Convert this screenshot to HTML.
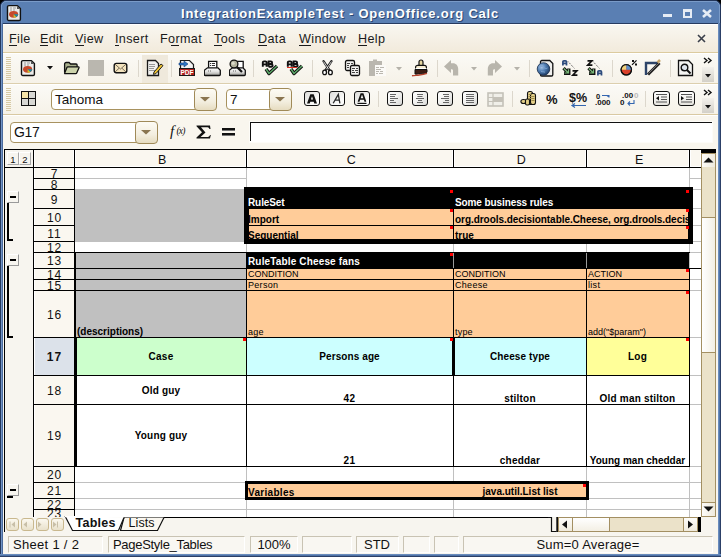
<!DOCTYPE html><html><head><meta charset="utf-8"><style>html,body{margin:0;padding:0;width:721px;height:557px;overflow:hidden;background:#f7f5ef;}body>div,body div{position:absolute;box-sizing:border-box;}svg{position:absolute}</style></head><body>
<div style="left:0px;top:0px;width:721px;height:557px;background:#4d6fa3"></div>
<div style="left:0px;top:0px;width:721px;height:24px;background:#5a7fb3;border-top:1px solid #22355a;border-radius:6px 6px 0 0;border-left:1px solid #22355a;border-right:1px solid #22355a"></div>
<div style="left:4px;top:1px;width:713px;height:1px;background:#7a9bc8"></div>
<svg style="position:absolute;left:0px;top:0px" width="6" height="6" viewBox="0 0 6 6"><path d="M0 0H6V0.5C3 0.5 0.5 3 0.5 6H0z" fill="#000"/><path d="M0.5 6C0.5 3 3 0.5 6 0.5" fill="none" stroke="#22355a" stroke-width="1"/><path d="M1.5 6C1.5 3.5 3.5 1.5 6 1.5" fill="none" stroke="#7a9bc8" stroke-width="1"/></svg>
<svg style="position:absolute;left:715px;top:0px" width="6" height="6" viewBox="0 0 6 6"><g transform="translate(6,0) scale(-1,1)"><path d="M0 0H6V0.5C3 0.5 0.5 3 0.5 6H0z" fill="#000"/><path d="M0.5 6C0.5 3 3 0.5 6 0.5" fill="none" stroke="#22355a" stroke-width="1"/><path d="M1.5 6C1.5 3.5 3.5 1.5 6 1.5" fill="none" stroke="#7a9bc8" stroke-width="1"/></g></svg>
<div style="left:1px;top:5px;width:1px;height:18px;background:#7a9bc8"></div>
<div style="left:719px;top:5px;width:1px;height:18px;background:#7a9bc8"></div>
<div style="left:0px;top:23px;width:721px;height:1px;background:#263b60"></div>
<div style="left:0px;top:23px;width:1px;height:534px;background:#25385c"></div>
<div style="left:1px;top:23px;width:1px;height:534px;background:#7194c6"></div>
<div style="left:2px;top:23px;width:1px;height:534px;background:#4a6a9c"></div>
<div style="left:720px;top:23px;width:1px;height:534px;background:#2c4067"></div>
<div style="left:719px;top:23px;width:1px;height:534px;background:#4e72a6"></div>
<div style="left:718px;top:23px;width:1px;height:534px;background:#6a8cbd"></div>
<div style="left:0px;top:556px;width:721px;height:1px;background:#2c4067"></div>
<div style="left:0px;top:555px;width:721px;height:1px;background:#4e72a6"></div>
<div style="left:0px;top:554px;width:721px;height:1px;background:#6a8cbd"></div>
<div style="left:3px;top:24px;width:715px;height:530px;background:#f7f5ef"></div>
<svg style="position:absolute;left:6px;top:4px" width="16" height="18" viewBox="0 0 16 18"><path d="M2.8 1.6h8.6l3 3v10.6a1.3 1.3 0 0 1-1.3 1.3h-10.3a1.3 1.3 0 0 1-1.3-1.3v-12.3a1.3 1.3 0 0 1 1.3-1.3z" fill="#ececea" stroke="#111" stroke-width="1.4"/><path d="M11 1.6l3.4 3.4h-3.4z" fill="#555"/><g fill="#9a9a9a"><rect x="4" y="3.5" width="2" height="1"/><rect x="7" y="3.5" width="3" height="1"/><rect x="4" y="5.5" width="2" height="1"/><rect x="7" y="5.5" width="2" height="1"/></g><ellipse cx="7.6" cy="10.3" rx="4.6" ry="3.4" fill="#c54a2c"/><path d="M7.6 10.3h4.6a4.6 3.4 0 0 1-2 2.8z" fill="#1b8da6"/><path d="M7.6 10.3l2.6 2.8a4.6 3.4 0 0 1-2.6.6z" fill="#c9c428"/></svg>
<div style="top:8.00px;font-size:13px;line-height:13px;color:#2c4670;white-space:pre;font-family:'Liberation Sans',sans-serif;font-weight:bold;letter-spacing:0.78px;left:182px;">IntegrationExampleTest - OpenOffice.org Calc</div>
<div style="top:7.00px;font-size:13px;line-height:13px;color:#ffffff;white-space:pre;font-family:'Liberation Sans',sans-serif;font-weight:bold;letter-spacing:0.78px;left:181px;">IntegrationExampleTest - OpenOffice.org Calc</div>
<div style="left:663px;top:14px;width:9px;height:3px;background:#e6ecf5"></div>
<div style="left:683px;top:9px;width:9px;height:9px;border:2px solid #e6ecf5;border-top-width:3px"></div>
<svg style="position:absolute;left:702px;top:9px" width="10" height="9" viewBox="0 0 10 9"><path d="M1 1L9 8M9 1L1 8" stroke="#e6ecf5" stroke-width="2.6"/></svg>
<div style="left:3px;top:24px;width:715px;height:29px;background:linear-gradient(#f9f7f1,#f2eadb)"></div>
<div style="left:3px;top:24px;width:715px;height:1px;background:#ffffff"></div>
<div style="left:3px;top:52px;width:715px;height:1px;background:#dccb9f"></div>
<div style="top:33.13px;font-size:12.6px;line-height:12.6px;color:#1a1a1a;white-space:pre;font-family:'Liberation Sans',sans-serif;letter-spacing:0.35px;left:9px;">File</div>
<div style="top:33.13px;font-size:12.6px;line-height:12.6px;color:#1a1a1a;white-space:pre;font-family:'Liberation Sans',sans-serif;letter-spacing:0.35px;left:40px;">Edit</div>
<div style="top:33.13px;font-size:12.6px;line-height:12.6px;color:#1a1a1a;white-space:pre;font-family:'Liberation Sans',sans-serif;letter-spacing:0.35px;left:75px;">View</div>
<div style="top:33.13px;font-size:12.6px;line-height:12.6px;color:#1a1a1a;white-space:pre;font-family:'Liberation Sans',sans-serif;letter-spacing:0.35px;left:115px;">Insert</div>
<div style="top:33.13px;font-size:12.6px;line-height:12.6px;color:#1a1a1a;white-space:pre;font-family:'Liberation Sans',sans-serif;letter-spacing:0.35px;left:160px;">Format</div>
<div style="top:33.13px;font-size:12.6px;line-height:12.6px;color:#1a1a1a;white-space:pre;font-family:'Liberation Sans',sans-serif;letter-spacing:0.35px;left:214px;">Tools</div>
<div style="top:33.13px;font-size:12.6px;line-height:12.6px;color:#1a1a1a;white-space:pre;font-family:'Liberation Sans',sans-serif;letter-spacing:0.35px;left:258px;">Data</div>
<div style="top:33.13px;font-size:12.6px;line-height:12.6px;color:#1a1a1a;white-space:pre;font-family:'Liberation Sans',sans-serif;letter-spacing:0.35px;left:299px;">Window</div>
<div style="top:33.13px;font-size:12.6px;line-height:12.6px;color:#1a1a1a;white-space:pre;font-family:'Liberation Sans',sans-serif;letter-spacing:0.35px;left:358px;">Help</div>
<div style="left:9px;top:45px;width:8px;height:1px;background:#1a1a1a"></div>
<div style="left:40px;top:45px;width:8px;height:1px;background:#1a1a1a"></div>
<div style="left:75px;top:45px;width:9px;height:1px;background:#1a1a1a"></div>
<div style="left:115px;top:45px;width:4px;height:1px;background:#1a1a1a"></div>
<div style="left:171px;top:45px;width:8px;height:1px;background:#1a1a1a"></div>
<div style="left:214px;top:45px;width:8px;height:1px;background:#1a1a1a"></div>
<div style="left:258px;top:45px;width:9px;height:1px;background:#1a1a1a"></div>
<div style="left:299px;top:45px;width:12px;height:1px;background:#1a1a1a"></div>
<div style="left:358px;top:45px;width:9px;height:1px;background:#1a1a1a"></div>
<svg style="position:absolute;left:697px;top:34px" width="9" height="9" viewBox="0 0 9 9"><path d="M1 1L8 8M8 1L1 8" stroke="#3a3f4a" stroke-width="1.6"/></svg>
<div style="left:3px;top:53px;width:715px;height:30px;background:linear-gradient(#fbfaf6,#f6f2e8)"></div>
<div style="left:3px;top:85px;width:715px;height:29px;background:linear-gradient(#fbfaf6,#f6f2e8)"></div>
<div style="left:3px;top:53px;width:715px;height:1px;background:#ffffff"></div>
<div style="left:3px;top:83px;width:715px;height:1px;background:#dccfae"></div>
<div style="left:3px;top:84px;width:715px;height:1px;background:#ffffff"></div>
<div style="left:3px;top:114px;width:715px;height:1px;background:#d9c9a2"></div>
<div style="left:3px;top:115px;width:715px;height:1px;background:#ffffff"></div>
<div style="left:6px;top:57px;width:5px;height:1px;background:#d6c9a4"></div>
<div style="left:6px;top:59px;width:5px;height:1px;background:#d6c9a4"></div>
<div style="left:6px;top:61px;width:5px;height:1px;background:#d6c9a4"></div>
<div style="left:6px;top:63px;width:5px;height:1px;background:#d6c9a4"></div>
<div style="left:6px;top:65px;width:5px;height:1px;background:#d6c9a4"></div>
<div style="left:6px;top:67px;width:5px;height:1px;background:#d6c9a4"></div>
<div style="left:6px;top:69px;width:5px;height:1px;background:#d6c9a4"></div>
<div style="left:6px;top:71px;width:5px;height:1px;background:#d6c9a4"></div>
<div style="left:6px;top:73px;width:5px;height:1px;background:#d6c9a4"></div>
<div style="left:6px;top:75px;width:5px;height:1px;background:#d6c9a4"></div>
<div style="left:6px;top:77px;width:5px;height:1px;background:#d6c9a4"></div>
<div style="left:6px;top:79px;width:5px;height:1px;background:#d6c9a4"></div>
<div style="left:6px;top:88px;width:5px;height:1px;background:#d6c9a4"></div>
<div style="left:6px;top:90px;width:5px;height:1px;background:#d6c9a4"></div>
<div style="left:6px;top:92px;width:5px;height:1px;background:#d6c9a4"></div>
<div style="left:6px;top:94px;width:5px;height:1px;background:#d6c9a4"></div>
<div style="left:6px;top:96px;width:5px;height:1px;background:#d6c9a4"></div>
<div style="left:6px;top:98px;width:5px;height:1px;background:#d6c9a4"></div>
<div style="left:6px;top:100px;width:5px;height:1px;background:#d6c9a4"></div>
<div style="left:6px;top:102px;width:5px;height:1px;background:#d6c9a4"></div>
<div style="left:6px;top:104px;width:5px;height:1px;background:#d6c9a4"></div>
<div style="left:6px;top:106px;width:5px;height:1px;background:#d6c9a4"></div>
<div style="left:6px;top:108px;width:5px;height:1px;background:#d6c9a4"></div>
<div style="left:6px;top:110px;width:5px;height:1px;background:#d6c9a4"></div>
<svg style="position:absolute;left:20px;top:59px" width="16" height="18" viewBox="0 0 16 18"><path d="M2.8 1.6h8.6l3 3v10.6a1.3 1.3 0 0 1-1.3 1.3h-10.3a1.3 1.3 0 0 1-1.3-1.3v-12.3a1.3 1.3 0 0 1 1.3-1.3z" fill="#ececea" stroke="#111" stroke-width="1.4"/><path d="M11 1.6l3.4 3.4h-3.4z" fill="#555"/><g fill="#9a9a9a"><rect x="4" y="3.5" width="2" height="1"/><rect x="7" y="3.5" width="3" height="1"/><rect x="4" y="5.5" width="2" height="1"/><rect x="7" y="5.5" width="2" height="1"/></g><ellipse cx="7.6" cy="10.3" rx="4.6" ry="3.4" fill="#c54a2c"/><path d="M7.6 10.3h4.6a4.6 3.4 0 0 1-2 2.8z" fill="#1b8da6"/><path d="M7.6 10.3l2.6 2.8a4.6 3.4 0 0 1-2.6.6z" fill="#c9c428"/></svg>
<svg style="position:absolute;left:47px;top:66px" width="6" height="4" viewBox="0 0 6 4"><path d="M0 0h6L3 3.5z" fill="#111"/></svg>
<svg style="position:absolute;left:63px;top:61px" width="17" height="14" viewBox="0 0 17 14"><path d="M1.6 11.5V3a1.5 1.5 0 0 1 1.5-1.5h3l1.5 1.5h5.5a1 1 0 0 1 1 1v2" fill="#a9b08c" stroke="#111" stroke-width="1.3"/><path d="M1.6 12.3l2.3-5.8a1 1 0 0 1 .9-.6h10.7a.6.6 0 0 1 .5.8l-2.3 5.4a1 1 0 0 1-.9.6h-10.6a.6.6 0 0 1-.6-.4z" fill="#ccd3ab" stroke="#111" stroke-width="1.3"/></svg>
<div style="left:88px;top:60px;width:16px;height:16px;background:#bab7af"></div>
<svg style="position:absolute;left:113px;top:62px" width="15" height="12" viewBox="0 0 15 12"><rect x="1.2" y="1.4" width="12.6" height="9.4" rx="2" fill="#f3e3bd" stroke="#111" stroke-width="1.4"/><path d="M2 2.2L7.5 7l5.5-4.8M2 10L6 6.3M13 10L9 6.3" fill="none" stroke="#6b6150" stroke-width="0.9"/></svg>
<div style="left:138px;top:60px;width:1px;height:17px;background:#dcd7cc"></div>
<div style="left:142px;top:55px;width:26px;height:28px;background:#efe9dc"></div>
<svg style="position:absolute;left:146px;top:59px" width="18" height="18" viewBox="0 0 18 18"><path d="M1.5 1.5h8l3 3v12h-11z" fill="#f2f2f0" stroke="#1a1a1a" stroke-width="1.3"/><g fill="#999"><rect x="3" y="5" width="6" height="1"/><rect x="3" y="7" width="6" height="1"/><rect x="3" y="9" width="5" height="1"/><rect x="3" y="11" width="6" height="1"/></g><path d="M8 13l7-8 2 1.6-7 8-2.6.8z" fill="#f2c530" stroke="#222" stroke-width="1"/></svg>
<div style="left:171px;top:60px;width:1px;height:17px;background:#dcd7cc"></div>
<svg style="position:absolute;left:178px;top:59px" width="18" height="18" viewBox="0 0 18 18"><path d="M2.5 1.5h9l4 4v11h-13z" fill="#f2f2f2" stroke="#1a1a1a" stroke-width="1.2"/><rect x="1.5" y="9.5" width="15" height="7" fill="#b3201e" stroke="#1a1a1a" stroke-width="1"/><text x="9" y="16" font-family="Liberation Sans" font-weight="bold" font-size="6.5" fill="#fff" text-anchor="middle">PDF</text><path d="M1 4h5V2l4 3-4 3V6H1z" fill="#2d74c4" stroke="#153e78" stroke-width=".6"/></svg>
<svg style="position:absolute;left:204px;top:60px" width="17" height="17" viewBox="0 0 17 17"><defs><linearGradient id="pg" x1="0" y1="0" x2="0" y2="1"><stop offset="0" stop-color="#fff"/><stop offset=".5" stop-color="#e2e2e0"/><stop offset="1" stop-color="#9c9c98"/></linearGradient></defs><path d="M4.6 8V1.4h8.2V8" fill="#fff" stroke="#111" stroke-width="1.3"/><g fill="#333"><rect x="6" y="3" width="1.2" height="1"/><rect x="8" y="3" width="3" height="1"/><rect x="6" y="5" width="1.2" height="1"/><rect x="8" y="5" width="3" height="1"/></g><path d="M3.5 7.8h10.5l2.3 2.5v4.2a1 1 0 0 1-1 1h-14a1 1 0 0 1-1-1v-4.2z" fill="url(#pg)" stroke="#111" stroke-width="1.3"/><rect x="4" y="10.5" width="1" height="1" fill="#666"/><rect x="6" y="10.5" width="1" height="1" fill="#666"/></svg>
<svg style="position:absolute;left:229px;top:59px" width="17" height="18" viewBox="0 0 17 18"><path d="M6 9V2.4h8.2V9" fill="#fff" stroke="#111" stroke-width="1.3"/><path d="M3.5 8.8h10.5l2.3 2.5v4.2a1 1 0 0 1-1 1h-14a1 1 0 0 1-1-1v-4.2z" fill="url(#pg)" stroke="#111" stroke-width="1.3"/><rect x="4" y="11.5" width="1" height="1" fill="#666"/><rect x="6" y="11.5" width="1" height="1" fill="#666"/><path d="M6.5 6.5l6.5 6.5" stroke="#111" stroke-width="2.2"/><circle cx="5" cy="5" r="3.9" fill="#b4b49e" stroke="#111" stroke-width="1.3"/><circle cx="4.2" cy="4.2" r="1.5" fill="#dcdccc"/></svg>
<div style="left:253px;top:60px;width:1px;height:17px;background:#dcd7cc"></div>
<svg style="position:absolute;left:261px;top:60px" width="18" height="16" viewBox="0 0 18 16"><path d="M1.8 6.8V2.6a1.2 1.2 0 0 1 1.2-1.2h1.4a1.2 1.2 0 0 1 1.2 1.2v4.2M1.8 4.4h3.8M7.6 6.8V1.4h2.2a1.3 1.3 0 0 1 0 2.6H7.6M7.6 4h2.6a1.4 1.4 0 0 1 0 2.8H7.6" fill="none" stroke="#111" stroke-width="1.9"/><path d="M5 9l3 4.5 8-7.5" fill="none" stroke="#111" stroke-width="3.4" stroke-linejoin="round"/><path d="M5 9l3 4.5 8-7.5" fill="none" stroke="#5fae6c" stroke-width="1.4"/></svg>
<svg style="position:absolute;left:286px;top:60px" width="18" height="16" viewBox="0 0 18 16"><path d="M1.8 6.8V2.6a1.2 1.2 0 0 1 1.2-1.2h1.4a1.2 1.2 0 0 1 1.2 1.2v4.2M1.8 4.4h3.8M7.6 6.8V1.4h2.2a1.3 1.3 0 0 1 0 2.6H7.6M7.6 4h2.6a1.4 1.4 0 0 1 0 2.8H7.6" fill="none" stroke="#111" stroke-width="1.9"/><path d="M1 8l1-1 1 1 1-1 1 1 1-1 1 1 1-1 1 1 1-1 1 1" stroke="#e03020" stroke-width="1" fill="none"/><path d="M5 9l3 4.5 8-7.5" fill="none" stroke="#111" stroke-width="3.4" stroke-linejoin="round"/><path d="M5 9l3 4.5 8-7.5" fill="none" stroke="#5fae6c" stroke-width="1.4"/></svg>
<div style="left:312px;top:60px;width:1px;height:17px;background:#dcd7cc"></div>
<svg style="position:absolute;left:321px;top:60px" width="13" height="16" viewBox="0 0 13 16"><path d="M2.5 1.2L8.3 10M10.5 1.2L4.7 10" fill="none" stroke="#222" stroke-width="2.3" stroke-linecap="round"/><path d="M2.6 1.6L7.6 9.2M10.4 1.6L5.4 9.2" fill="none" stroke="#f0f0f0" stroke-width="0.8"/><ellipse cx="3.6" cy="12.4" rx="1.9" ry="2.3" fill="#fff" stroke="#111" stroke-width="1.3"/><ellipse cx="9.4" cy="12.4" rx="1.9" ry="2.3" fill="#fff" stroke="#111" stroke-width="1.3"/></svg>
<svg style="position:absolute;left:344px;top:59px" width="17" height="18" viewBox="0 0 17 18"><rect x="1.5" y="1.5" width="9" height="10" rx="1.5" fill="#f2f2f0" stroke="#111" stroke-width="1.3"/><rect x="6.5" y="6.5" width="9" height="10" rx="1.5" fill="#f2f2f0" stroke="#111" stroke-width="1.3"/><g fill="#444"><rect x="3" y="4" width="3" height="1"/><rect x="7" y="4" width="2" height="1"/><rect x="3" y="6" width="2" height="1"/><rect x="3" y="8" width="2" height="1"/><rect x="8" y="9" width="3" height="1"/><rect x="12" y="9" width="2" height="1"/><rect x="8" y="11" width="2" height="1"/><rect x="11" y="11" width="3" height="1"/><rect x="8" y="13" width="3" height="1"/><rect x="12" y="13" width="2" height="1"/></g></svg>
<svg style="position:absolute;left:368px;top:59px" width="19" height="18" viewBox="0 0 19 18"><rect x="1" y="2" width="13" height="15" fill="#bab7af"/><rect x="5" y="0.5" width="4" height="3" fill="#bab7af"/><rect x="7" y="6" width="11" height="11" fill="#fbfaf7"/><g fill="#bab7af"><rect x="8" y="8" width="3" height="1"/><rect x="12" y="8" width="4" height="1"/><rect x="8" y="10" width="5" height="1"/><rect x="8" y="12" width="3" height="1"/><rect x="12" y="12" width="3" height="1"/><rect x="8" y="14" width="2" height="1"/><rect x="11" y="14" width="4" height="1"/></g></svg>
<svg style="position:absolute;left:396px;top:67px" width="6" height="4" viewBox="0 0 6 4"><path d="M0 0h6L3 3.5z" fill="#b5b2aa"/></svg>
<svg style="position:absolute;left:411px;top:59px" width="18" height="18" viewBox="0 0 18 18"><path d="M8 6.5V3a2 2 0 0 1 4 0v3.5" fill="#e6d7a0" stroke="#111" stroke-width="1.2"/><path d="M4.6 11V8.3a2 2 0 0 1 2-2h6.8a2 2 0 0 1 2 2V11" fill="#f5ecd0" stroke="#111" stroke-width="1.2"/><rect x="4.5" y="9" width="11" height="1.3" fill="#fff"/><path d="M4 10.5h12v2.5c-1 1.5-2 2-3 1.2-1 1-2 .5-3 .3-1 .8-2 .5-3 .2-1 .8-2 .5-3 .3z" fill="#3b1d14" stroke="#111" stroke-width="1"/><path d="M1 16.8c2-.5 4-.4 6-.6 3-.3 6-.6 9-1.8" stroke="#b5422c" stroke-width="1.4" fill="none"/></svg>
<div style="left:437px;top:60px;width:1px;height:17px;background:#dcd7cc"></div>
<svg style="position:absolute;left:443px;top:60px" width="16" height="16" viewBox="0 0 16 16"><path d="M1 6.5L8 0V13Z M7.5 3.2H10C13 3.2 15.2 5.6 15.2 9V15.6H10V10.8C10 9.8 9.5 9.3 8.5 9.3H7.5Z" fill="#b8b5ac"/></svg>
<svg style="position:absolute;left:471px;top:67px" width="6" height="4" viewBox="0 0 6 4"><path d="M0 0h6L3 3.5z" fill="#b5b2aa"/></svg>
<svg style="position:absolute;left:487px;top:60px" width="16" height="16" viewBox="0 0 16 16"><g transform="translate(16,0) scale(-1,1)"><path d="M1 6.5L8 0V13Z M7.5 3.2H10C13 3.2 15.2 5.6 15.2 9V15.6H10V10.8C10 9.8 9.5 9.3 8.5 9.3H7.5Z" fill="#b8b5ac"/></g></svg>
<svg style="position:absolute;left:514px;top:67px" width="6" height="4" viewBox="0 0 6 4"><path d="M0 0h6L3 3.5z" fill="#b5b2aa"/></svg>
<div style="left:529px;top:60px;width:1px;height:17px;background:#dcd7cc"></div>
<svg style="position:absolute;left:536px;top:59px" width="18" height="18" viewBox="0 0 18 18"><defs><radialGradient id="gl" cx=".35" cy=".35" r=".7"><stop offset="0" stop-color="#a9c6e8"/><stop offset=".5" stop-color="#4d7bb0"/><stop offset="1" stop-color="#1f3d66"/></radialGradient></defs><path d="M5.8 1.5h8l3 3v11.2a1.3 1.3 0 0 1-1.3 1.3h-9.7a1.3 1.3 0 0 1-1.3-1.3v-12.9a1.3 1.3 0 0 1 1.3-1.3z" fill="#f0f0ee" stroke="#111" stroke-width="1.3"/><circle cx="7.5" cy="10" r="6.3" fill="url(#gl)" stroke="#1c2f4c" stroke-width=".8"/><path d="M4 8c1.5-1 3-.5 4 .5s2.5 1.5 3.5.5M5 12.5c1.5.5 3 0 4 .8" stroke="#7fa3cf" stroke-width="1" fill="none"/></svg>
<svg style="position:absolute;left:561px;top:59px" width="18" height="18" viewBox="0 0 18 18"><path transform="translate(1,1)" d="M0.9 5.6V1.9a1 1 0 0 1 1-1h1.6a1 1 0 0 1 1 1v3.7M0.9 3.4h3.6" fill="none" stroke="#2c4b7c" stroke-width="1.7"/><path d="M7 2.5l6.5 7" stroke="#333" stroke-width="1" stroke-dasharray="1 1.3"/><path d="M2.5 9.2l4.8 4.8M7.8 9.6v4.8H3" fill="none" stroke="#111" stroke-width="3.3"/><path d="M2.8 9.5l4.5 4.5M7.5 10.2v3.8H3.5" fill="none" stroke="#79b777" stroke-width="1.2"/><path transform="translate(11,11)" d="M0.5 0.9h4.4L0.8 5.1h4.6" fill="none" stroke="#111" stroke-width="1.6"/></svg>
<svg style="position:absolute;left:586px;top:59px" width="18" height="18" viewBox="0 0 18 18"><path transform="translate(1,1)" d="M0.5 0.9h4.4L0.8 5.1h4.6" fill="none" stroke="#111" stroke-width="1.6"/><path d="M7 2.5l6.5 7" stroke="#333" stroke-width="1" stroke-dasharray="1 1.3"/><path d="M2.5 9.2l4.8 4.8M7.8 9.6v4.8H3" fill="none" stroke="#111" stroke-width="3.3"/><path d="M2.8 9.5l4.5 4.5M7.5 10.2v3.8H3.5" fill="none" stroke="#79b777" stroke-width="1.2"/><path transform="translate(11,11)" d="M0.9 5.6V1.9a1 1 0 0 1 1-1h1.6a1 1 0 0 1 1 1v3.7M0.9 3.4h3.6" fill="none" stroke="#2c4b7c" stroke-width="1.7"/></svg>
<div style="left:612px;top:60px;width:1px;height:17px;background:#dcd7cc"></div>
<svg style="position:absolute;left:619px;top:59px" width="20" height="18" viewBox="0 0 20 18"><circle cx="7.3" cy="10.8" r="5.2" fill="#d8402a" stroke="#111" stroke-width="1.2"/><path d="M7.3 10.8V5.6a5.2 5.2 0 0 0-5.2 5.2z" fill="#f1d27a"/><path d="M7.3 10.8V5.6a5.2 5.2 0 0 1 5.2 5.2z" fill="#5d8fc8"/><circle cx="7.3" cy="10.8" r="5.2" fill="none" stroke="#111" stroke-width="1.2"/><path d="M13 5.8l4.5-4.5" stroke="#111" stroke-width="1.2"/><rect x="13" y="1" width="2" height="2" fill="#111"/><rect x="16" y="4.5" width="2" height="2" fill="#111"/></svg>
<svg style="position:absolute;left:644px;top:59px" width="18" height="18" viewBox="0 0 18 18"><path d="M2 16V4h12" fill="none" stroke="#2d4468" stroke-width="2.4"/><path d="M4 15.5L15.5 4" stroke="#222" stroke-width="3"/><path d="M4.5 14.5L15 4" stroke="#888" stroke-width="0.8"/><path d="M13.5 3.5l2.5-2.5" stroke="#c7a56a" stroke-width="2.5"/></svg>
<div style="left:670px;top:60px;width:1px;height:17px;background:#dcd7cc"></div>
<svg style="position:absolute;left:677px;top:59px" width="17" height="18" viewBox="0 0 17 18"><path d="M1.5 1.5h10l4 4v11h-14z" fill="#f4f4f2" stroke="#111" stroke-width="1.3"/><circle cx="7.5" cy="8.5" r="3.3" fill="#dfe6ee" stroke="#111" stroke-width="1.4"/><path d="M10 11l3.5 3.5" stroke="#111" stroke-width="2"/></svg>
<div style="left:702px;top:67px;width:12px;height:15px;background:linear-gradient(#f3f1ec,#d3d0c8)"></div>
<svg style="position:absolute;left:703px;top:57px" width="10" height="7" viewBox="0 0 10 7"><path d="M1 1l3 2.5-3 2.5M5 1l3 2.5-3 2.5" fill="none" stroke="#111" stroke-width="1.4"/></svg>
<svg style="position:absolute;left:705px;top:74px" width="6" height="4" viewBox="0 0 6 4"><path d="M0 0h6L3 3.5z" fill="#111"/></svg>
<div style="left:702px;top:98px;width:12px;height:15px;background:linear-gradient(#f3f1ec,#d3d0c8)"></div>
<svg style="position:absolute;left:703px;top:89px" width="10" height="7" viewBox="0 0 10 7"><path d="M1 1l3 2.5-3 2.5M5 1l3 2.5-3 2.5" fill="none" stroke="#111" stroke-width="1.4"/></svg>
<svg style="position:absolute;left:705px;top:105px" width="6" height="4" viewBox="0 0 6 4"><path d="M0 0h6L3 3.5z" fill="#111"/></svg>
<svg style="position:absolute;left:20px;top:90px" width="17" height="17" viewBox="0 0 17 17"><rect x="1" y="1" width="15" height="15" fill="#111"/><rect x="2" y="2" width="6" height="6" fill="#f6e4a8"/><rect x="9" y="2" width="6" height="6" fill="#d8d8d4"/><rect x="2" y="9" width="6" height="6" fill="#d8d8d4"/><rect x="9" y="9" width="6" height="6" fill="#d8d8d4"/></svg>
<div style="left:51px;top:89px;width:147px;height:21px;background:#fff;border:1px solid #a8925f;border-radius:4px 0 0 4px"></div>
<div style="left:194px;top:88px;width:23px;height:23px;background:linear-gradient(#fdfbf4,#f3eedf 60%,#e6dcc0);border:1px solid #a08a58;border-radius:4px"></div>
<svg style="position:absolute;left:200px;top:97px" width="10" height="5" viewBox="0 0 10 5"><path d="M0 0h10L5 4.5z" fill="#8a7550"/></svg>
<div style="top:93.07px;font-size:13.5px;line-height:13.5px;color:#111;white-space:pre;font-family:'Liberation Sans',sans-serif;left:55px;">Tahoma</div>
<div style="left:226px;top:89px;width:47px;height:21px;background:#fff;border:1px solid #a8925f;border-radius:4px 0 0 4px"></div>
<div style="left:269px;top:88px;width:23px;height:23px;background:linear-gradient(#fdfbf4,#f3eedf 60%,#e6dcc0);border:1px solid #a08a58;border-radius:4px"></div>
<svg style="position:absolute;left:275px;top:97px" width="10" height="5" viewBox="0 0 10 5"><path d="M0 0h10L5 4.5z" fill="#8a7550"/></svg>
<div style="top:93.07px;font-size:13.5px;line-height:13.5px;color:#111;white-space:pre;font-family:'Liberation Sans',sans-serif;left:230px;">7</div>
<div style="left:304px;top:91px;width:16px;height:15px;background:linear-gradient(135deg,#dcdcda,#fafaf8 70%,#fff);border:1.4px solid #111;border-radius:3px"></div>
<svg style="position:absolute;left:304px;top:91px" width="16" height="15" viewBox="0 0 16 15"><path fill-rule="evenodd" d="M3 12.5L6.3 3.2h3.4L13 12.5h-2.7l-.6-1.8H6.3l-.6 1.8zM6.9 8.6h2.2L8 5.3z" fill="#111"/></svg>
<div style="left:329px;top:91px;width:16px;height:15px;background:linear-gradient(135deg,#dcdcda,#fafaf8 70%,#fff);border:1.4px solid #111;border-radius:3px"></div>
<svg style="position:absolute;left:329px;top:91px" width="16" height="15" viewBox="0 0 16 15"><path d="M4.2 12.3L9.3 3.4l1.6 8.9M6.2 9.2h4.4" fill="none" stroke="#2a2a2a" stroke-width="1.3"/></svg>
<div style="left:354px;top:91px;width:16px;height:15px;background:linear-gradient(135deg,#dcdcda,#fafaf8 70%,#fff);border:1.4px solid #111;border-radius:3px"></div>
<svg style="position:absolute;left:354px;top:91px" width="16" height="15" viewBox="0 0 16 15"><path d="M4.5 10.8L7.2 3.2h1.6l2.7 7.6M5.8 8h4.4" fill="none" stroke="#111" stroke-width="1.7"/><rect x="3.5" y="11.8" width="9" height="1.2" fill="#111"/></svg>
<div style="left:378px;top:91px;width:1px;height:16px;background:#dcd7cc"></div>
<div style="left:387px;top:91px;width:16px;height:15px;background:linear-gradient(135deg,#fff,#f4f4f2 40%,#dadad8);border:1.4px solid #111;border-radius:3px"></div>
<svg style="position:absolute;left:387px;top:91px" width="16" height="15" viewBox="0 0 16 15"><rect x="3" y="3" width="6" height="1" fill="#666"/><rect x="3" y="5" width="5" height="1" fill="#666"/><rect x="3" y="7" width="8" height="1" fill="#666"/><rect x="3" y="9" width="4" height="1" fill="#666"/><rect x="3" y="11" width="6" height="1" fill="#666"/></svg>
<div style="left:412px;top:91px;width:16px;height:15px;background:linear-gradient(135deg,#fff,#f4f4f2 40%,#dadad8);border:1.4px solid #111;border-radius:3px"></div>
<svg style="position:absolute;left:412px;top:91px" width="16" height="15" viewBox="0 0 16 15"><rect x="5.0" y="3" width="6" height="1" fill="#666"/><rect x="5.5" y="5" width="5" height="1" fill="#666"/><rect x="4.0" y="7" width="8" height="1" fill="#666"/><rect x="6.0" y="9" width="4" height="1" fill="#666"/><rect x="5.0" y="11" width="6" height="1" fill="#666"/></svg>
<div style="left:437px;top:91px;width:16px;height:15px;background:linear-gradient(135deg,#fff,#f4f4f2 40%,#dadad8);border:1.4px solid #111;border-radius:3px"></div>
<svg style="position:absolute;left:437px;top:91px" width="16" height="15" viewBox="0 0 16 15"><rect x="6" y="3" width="6" height="1" fill="#666"/><rect x="7" y="5" width="5" height="1" fill="#666"/><rect x="4" y="7" width="8" height="1" fill="#666"/><rect x="8" y="9" width="4" height="1" fill="#666"/><rect x="6" y="11" width="6" height="1" fill="#666"/></svg>
<div style="left:462px;top:91px;width:16px;height:15px;background:linear-gradient(135deg,#fff,#f4f4f2 40%,#dadad8);border:1.4px solid #111;border-radius:3px"></div>
<svg style="position:absolute;left:462px;top:91px" width="16" height="15" viewBox="0 0 16 15"><rect x="4" y="3" width="8" height="1" fill="#666"/><rect x="4" y="5" width="8" height="1" fill="#666"/><rect x="4" y="7" width="8" height="1" fill="#666"/><rect x="4" y="9" width="8" height="1" fill="#666"/><rect x="4" y="11" width="8" height="1" fill="#666"/></svg>
<svg style="position:absolute;left:487px;top:92px" width="17" height="15" viewBox="0 0 17 15"><rect x="1" y="1" width="15" height="13" fill="#f0efe9" stroke="#c4c1b8" stroke-width="1.6"/><rect x="6" y="5.5" width="10" height="4" fill="#c4c1b8"/><path d="M1 5.5h15M1 9.5h15M6 1v13" stroke="#c4c1b8" stroke-width="1.2"/></svg>
<div style="left:512px;top:91px;width:1px;height:16px;background:#dcd7cc"></div>
<svg style="position:absolute;left:520px;top:90px" width="17" height="16" viewBox="0 0 17 16"><g stroke="#111" stroke-width="1.1" fill="#e4d08a"><rect x="7.5" y="1.5" width="5" height="13" rx="2"/><rect x="10.5" y="3.5" width="5" height="11" rx="2"/><ellipse cx="3.5" cy="11.5" rx="2.6" ry="2"/><rect x="5.5" y="9" width="4" height="6" rx="1.5"/></g><g fill="#9c8a4a"><rect x="8.5" y="4" width="3" height="1"/><rect x="8.5" y="6" width="3" height="1"/><rect x="8.5" y="8" width="3" height="1"/><rect x="11.5" y="6" width="3" height="1"/><rect x="11.5" y="8" width="3" height="1"/><rect x="11.5" y="10" width="3" height="1"/></g></svg>
<div style="top:92.50px;font-size:13px;line-height:13px;color:#111;white-space:pre;font-family:'Liberation Sans',sans-serif;font-weight:bold;left:546px;">%</div>
<div style="top:92.42px;font-size:12.5px;line-height:12.5px;color:#111;white-space:pre;font-family:'Liberation Sans',sans-serif;font-weight:bold;left:569px;">$%</div>
<svg style="position:absolute;left:570px;top:103px" width="17" height="5" viewBox="0 0 17 5"><path d="M16 2.5H3M5 0.5L2 2.5 5 4.5" fill="none" stroke="#3466b0" stroke-width="1.2"/></svg>
<div style="top:92.65px;font-size:7.5px;line-height:7.5px;color:#111;white-space:pre;font-family:'Liberation Sans',sans-serif;font-weight:bold;left:596px;">0</div>
<svg style="position:absolute;left:602px;top:94px" width="9" height="5" viewBox="0 0 9 5"><path d="M0 1.5h7v2M5 1.5l2 1.5" fill="none" stroke="#3466b0" stroke-width="1.1"/></svg>
<div style="top:98.73px;font-size:8px;line-height:8px;color:#111;white-space:pre;font-family:'Liberation Sans',sans-serif;font-weight:bold;left:595px;">.000</div>
<div style="top:92.23px;font-size:8px;line-height:8px;color:#111;white-space:pre;font-family:'Liberation Sans',sans-serif;font-weight:bold;left:622px;">.00</div>
<div style="top:92.23px;font-size:8px;line-height:8px;color:#bbb;white-space:pre;font-family:'Liberation Sans',sans-serif;font-weight:bold;left:634px;">0</div>
<div style="top:98.73px;font-size:8px;line-height:8px;color:#111;white-space:pre;font-family:'Liberation Sans',sans-serif;font-weight:bold;left:620px;">0</div>
<svg style="position:absolute;left:626px;top:100px" width="10" height="6" viewBox="0 0 10 6"><path d="M8 0v3.5H2M4 1.5L2 3.5 4 5.5" fill="none" stroke="#3466b0" stroke-width="1.1"/></svg>
<div style="left:645px;top:91px;width:1px;height:16px;background:#dcd7cc"></div>
<div style="left:653px;top:91px;width:17px;height:15px;background:linear-gradient(#fff,#e6e4de);border:1.4px solid #111;border-radius:3px"></div>
<svg style="position:absolute;left:653px;top:91px" width="17" height="15" viewBox="0 0 17 15"><g fill="#555"><rect x="3" y="3" width="11" height="1"/><rect x="8" y="5.5" width="6" height="1"/><rect x="8" y="8" width="6" height="1"/><rect x="3" y="10.5" width="11" height="1"/></g><path d="M6 5L3 7.2 6 9.5z" fill="#111"/></svg>
<div style="left:678px;top:91px;width:17px;height:15px;background:linear-gradient(#fff,#e6e4de);border:1.4px solid #111;border-radius:3px"></div>
<svg style="position:absolute;left:678px;top:91px" width="17" height="15" viewBox="0 0 17 15"><g fill="#555"><rect x="3" y="3" width="11" height="1"/><rect x="8" y="5.5" width="6" height="1"/><rect x="8" y="8" width="6" height="1"/><rect x="3" y="10.5" width="11" height="1"/></g><path d="M3 5l3 2.2L3 9.5z" fill="#111"/></svg>
<div style="left:3px;top:116px;width:715px;height:33px;background:#f9f6ee"></div>
<div style="left:10px;top:122px;width:129px;height:21px;background:#fff;border:1px solid #a8925f;border-radius:4px 0 0 4px"></div>
<div style="left:135px;top:121px;width:23px;height:23px;background:linear-gradient(#fdfbf4,#f3eedf 60%,#e6dcc0);border:1px solid #a08a58;border-radius:4px"></div>
<svg style="position:absolute;left:141px;top:130px" width="10" height="5" viewBox="0 0 10 5"><path d="M0 0h10L5 4.5z" fill="#8a7550"/></svg>
<div style="top:125.35px;font-size:14px;line-height:14px;color:#111;white-space:pre;font-family:'Liberation Sans',sans-serif;letter-spacing:-0.3px;left:14px;">G17</div>
<div style="top:124.30px;font-size:15px;line-height:15px;color:#111;white-space:pre;font-family:'Liberation Serif',sans-serif;left:170px;font-style:italic;">f</div>
<div style="top:127.46px;font-size:9.5px;line-height:9.5px;color:#111;white-space:pre;font-family:'Liberation Serif',sans-serif;left:176.5px;font-style:italic;letter-spacing:-0.8px;">(x)</div>
<svg style="position:absolute;left:196px;top:125px" width="15" height="14" viewBox="0 0 15 14"><path d="M0.5 0.5H14L14.5 4H13.5C13 2.5 12 2.2 10.5 2.2H5L9.5 7.5L4.5 12H11C12.5 12 13.5 11.5 14 10H14.8L14 13.5H0.5V12.6L6 7.3L0.5 1.3Z" fill="#111"/></svg>
<div style="left:222px;top:128px;width:13px;height:2px;background:#111"></div>
<div style="left:222px;top:130px;width:13px;height:1px;background:#777"></div>
<div style="left:222px;top:133px;width:13px;height:2px;background:#111"></div>
<div style="left:222px;top:135px;width:13px;height:1px;background:#777"></div>
<div style="left:249px;top:121px;width:464px;height:22px;background:#fff;border:1px solid #fdfcf8"></div>
<div style="left:250px;top:122px;width:462px;height:1px;background:#111"></div>
<div style="left:250px;top:122px;width:1px;height:19px;background:#111"></div>
<div style="left:4px;top:149px;width:697px;height:368px;background:#f7f5ef"></div>
<div style="left:4px;top:149px;width:697px;height:1px;background:#000"></div>
<div style="left:4px;top:149px;width:1px;height:383px;background:#000"></div>
<div style="left:33px;top:150px;width:1px;height:367px;background:#000"></div>
<div style="left:7px;top:152px;width:12px;height:13px;background:#f7f5ef;border-right:1px solid #a8a8a8;border-bottom:1px solid #a8a8a8;border-top:1px solid #fff;border-left:1px solid #fff"></div>
<div style="top:154.76px;font-size:9.5px;line-height:9.5px;color:#111;white-space:pre;font-family:'Liberation Sans',sans-serif;left:-487px;width:1000px;text-align:center;">1</div>
<div style="left:19px;top:152px;width:12px;height:13px;background:#f7f5ef;border-right:1px solid #a8a8a8;border-bottom:1px solid #a8a8a8;border-top:1px solid #fff;border-left:1px solid #fff"></div>
<div style="top:154.76px;font-size:9.5px;line-height:9.5px;color:#111;white-space:pre;font-family:'Liberation Sans',sans-serif;left:-475px;width:1000px;text-align:center;">2</div>
<div style="left:34px;top:150px;width:40px;height:17px;background:#faf7f0"></div>
<div style="left:75px;top:150px;width:171px;height:17px;background:#faf7f0"></div>
<div style="top:154.42px;font-size:12.5px;line-height:12.5px;color:#111;white-space:pre;font-family:'Liberation Sans',sans-serif;left:-337.8px;width:1000px;text-align:center;">B</div>
<div style="left:247px;top:150px;width:206px;height:17px;background:#faf7f0"></div>
<div style="top:154.42px;font-size:12.5px;line-height:12.5px;color:#111;white-space:pre;font-family:'Liberation Sans',sans-serif;left:-148.8px;width:1000px;text-align:center;">C</div>
<div style="left:454px;top:150px;width:132px;height:17px;background:#faf7f0"></div>
<div style="top:154.42px;font-size:12.5px;line-height:12.5px;color:#111;white-space:pre;font-family:'Liberation Sans',sans-serif;left:21.200000000000045px;width:1000px;text-align:center;">D</div>
<div style="left:587px;top:150px;width:102px;height:17px;background:#faf7f0"></div>
<div style="top:154.42px;font-size:12.5px;line-height:12.5px;color:#111;white-space:pre;font-family:'Liberation Sans',sans-serif;left:139.20000000000005px;width:1000px;text-align:center;">E</div>
<div style="left:690px;top:150px;width:11px;height:17px;background:#faf7f0"></div>
<div style="left:4px;top:167px;width:697px;height:1px;background:#000"></div>
<div style="left:74px;top:150px;width:2px;height:18px;background:#000"></div>
<div style="left:246px;top:150px;width:1px;height:17px;background:#000"></div>
<div style="left:453px;top:150px;width:1px;height:17px;background:#000"></div>
<div style="left:586px;top:150px;width:1px;height:17px;background:#000"></div>
<div style="left:689px;top:150px;width:1px;height:17px;background:#000"></div>
<div style="left:34px;top:166px;width:40px;height:1px;background:#ffffff"></div>
<div style="left:34px;top:150px;width:1px;height:17px;background:#ffffff"></div>
<div style="left:73px;top:150px;width:1px;height:17px;background:#ffffff"></div>
<div style="left:75px;top:166px;width:171px;height:1px;background:#ffffff"></div>
<div style="left:75px;top:150px;width:1px;height:17px;background:#ffffff"></div>
<div style="left:245px;top:150px;width:1px;height:17px;background:#ffffff"></div>
<div style="left:247px;top:166px;width:206px;height:1px;background:#ffffff"></div>
<div style="left:247px;top:150px;width:1px;height:17px;background:#ffffff"></div>
<div style="left:452px;top:150px;width:1px;height:17px;background:#ffffff"></div>
<div style="left:454px;top:166px;width:132px;height:1px;background:#ffffff"></div>
<div style="left:454px;top:150px;width:1px;height:17px;background:#ffffff"></div>
<div style="left:585px;top:150px;width:1px;height:17px;background:#ffffff"></div>
<div style="left:587px;top:166px;width:102px;height:1px;background:#ffffff"></div>
<div style="left:587px;top:150px;width:1px;height:17px;background:#ffffff"></div>
<div style="left:688px;top:150px;width:1px;height:17px;background:#ffffff"></div>
<div style="left:690px;top:166px;width:11px;height:1px;background:#ffffff"></div>
<div style="left:690px;top:150px;width:1px;height:17px;background:#ffffff"></div>
<div style="left:700px;top:150px;width:1px;height:17px;background:#ffffff"></div>
<div style="left:34px;top:168px;width:40px;height:10px;background:#faf7f0"></div>
<div style="left:34px;top:168px;width:1px;height:10px;background:#ffffff"></div>
<div style="left:34px;top:178px;width:40px;height:1px;background:#000"></div>
<div style="left:34px;top:167px;width:40px;height:11px;overflow:hidden"><div style="top:0.74px;font-size:12px;line-height:12px;color:#111;white-space:pre;font-family:'Liberation Sans',sans-serif;letter-spacing:0.9px;left:-479.5px;width:1000px;text-align:center;">7</div></div>
<div style="left:34px;top:179px;width:40px;height:10px;background:#faf7f0"></div>
<div style="left:34px;top:179px;width:1px;height:10px;background:#ffffff"></div>
<div style="left:34px;top:189px;width:40px;height:1px;background:#000"></div>
<div style="left:34px;top:178px;width:40px;height:11px;overflow:hidden"><div style="top:0.74px;font-size:12px;line-height:12px;color:#111;white-space:pre;font-family:'Liberation Sans',sans-serif;letter-spacing:0.9px;left:-479.5px;width:1000px;text-align:center;">8</div></div>
<div style="left:34px;top:190px;width:40px;height:18px;background:#faf7f0"></div>
<div style="left:34px;top:190px;width:1px;height:18px;background:#ffffff"></div>
<div style="left:34px;top:208px;width:40px;height:1px;background:#000"></div>
<div style="left:34px;top:189px;width:40px;height:19px;overflow:hidden"><div style="top:4.74px;font-size:12px;line-height:12px;color:#111;white-space:pre;font-family:'Liberation Sans',sans-serif;letter-spacing:0.9px;left:-479.5px;width:1000px;text-align:center;">9</div></div>
<div style="left:34px;top:209px;width:40px;height:16px;background:#faf7f0"></div>
<div style="left:34px;top:209px;width:1px;height:16px;background:#ffffff"></div>
<div style="left:34px;top:225px;width:40px;height:1px;background:#000"></div>
<div style="left:34px;top:208px;width:40px;height:17px;overflow:hidden"><div style="top:3.74px;font-size:12px;line-height:12px;color:#111;white-space:pre;font-family:'Liberation Sans',sans-serif;letter-spacing:0.9px;left:-479.5px;width:1000px;text-align:center;">10</div></div>
<div style="left:34px;top:226px;width:40px;height:15px;background:#faf7f0"></div>
<div style="left:34px;top:226px;width:1px;height:15px;background:#ffffff"></div>
<div style="left:34px;top:241px;width:40px;height:1px;background:#000"></div>
<div style="left:34px;top:225px;width:40px;height:16px;overflow:hidden"><div style="top:3.24px;font-size:12px;line-height:12px;color:#111;white-space:pre;font-family:'Liberation Sans',sans-serif;letter-spacing:0.9px;left:-479.5px;width:1000px;text-align:center;">11</div></div>
<div style="left:34px;top:242px;width:40px;height:10px;background:#faf7f0"></div>
<div style="left:34px;top:242px;width:1px;height:10px;background:#ffffff"></div>
<div style="left:34px;top:252px;width:40px;height:1px;background:#000"></div>
<div style="left:34px;top:241px;width:40px;height:11px;overflow:hidden"><div style="top:0.74px;font-size:12px;line-height:12px;color:#111;white-space:pre;font-family:'Liberation Sans',sans-serif;letter-spacing:0.9px;left:-479.5px;width:1000px;text-align:center;">12</div></div>
<div style="left:34px;top:253px;width:40px;height:15px;background:#faf7f0"></div>
<div style="left:34px;top:253px;width:1px;height:15px;background:#ffffff"></div>
<div style="left:34px;top:268px;width:40px;height:1px;background:#000"></div>
<div style="left:34px;top:252px;width:40px;height:16px;overflow:hidden"><div style="top:3.24px;font-size:12px;line-height:12px;color:#111;white-space:pre;font-family:'Liberation Sans',sans-serif;letter-spacing:0.9px;left:-479.5px;width:1000px;text-align:center;">13</div></div>
<div style="left:34px;top:269px;width:40px;height:10px;background:#faf7f0"></div>
<div style="left:34px;top:269px;width:1px;height:10px;background:#ffffff"></div>
<div style="left:34px;top:279px;width:40px;height:1px;background:#000"></div>
<div style="left:34px;top:268px;width:40px;height:11px;overflow:hidden"><div style="top:0.74px;font-size:12px;line-height:12px;color:#111;white-space:pre;font-family:'Liberation Sans',sans-serif;letter-spacing:0.9px;left:-479.5px;width:1000px;text-align:center;">14</div></div>
<div style="left:34px;top:280px;width:40px;height:10px;background:#faf7f0"></div>
<div style="left:34px;top:280px;width:1px;height:10px;background:#ffffff"></div>
<div style="left:34px;top:290px;width:40px;height:1px;background:#000"></div>
<div style="left:34px;top:279px;width:40px;height:11px;overflow:hidden"><div style="top:0.74px;font-size:12px;line-height:12px;color:#111;white-space:pre;font-family:'Liberation Sans',sans-serif;letter-spacing:0.9px;left:-479.5px;width:1000px;text-align:center;">15</div></div>
<div style="left:34px;top:291px;width:40px;height:46px;background:#faf7f0"></div>
<div style="left:34px;top:291px;width:1px;height:46px;background:#ffffff"></div>
<div style="left:34px;top:337px;width:40px;height:1px;background:#000"></div>
<div style="left:34px;top:290px;width:40px;height:47px;overflow:hidden"><div style="top:18.74px;font-size:12px;line-height:12px;color:#111;white-space:pre;font-family:'Liberation Sans',sans-serif;letter-spacing:0.9px;left:-479.5px;width:1000px;text-align:center;">16</div></div>
<div style="left:34px;top:338px;width:40px;height:37px;background:#dce2ea"></div>
<div style="left:34px;top:338px;width:1px;height:37px;background:#ffffff"></div>
<div style="left:34px;top:375px;width:40px;height:1px;background:#000"></div>
<div style="left:34px;top:337px;width:40px;height:38px;overflow:hidden"><div style="top:13.54px;font-size:12px;line-height:12px;color:#111;white-space:pre;font-family:'Liberation Sans',sans-serif;font-weight:bold;letter-spacing:1.0px;left:-479.5px;width:1000px;text-align:center;">17</div></div>
<div style="left:34px;top:376px;width:40px;height:28px;background:#faf7f0"></div>
<div style="left:34px;top:376px;width:1px;height:28px;background:#ffffff"></div>
<div style="left:34px;top:404px;width:40px;height:1px;background:#000"></div>
<div style="left:34px;top:375px;width:40px;height:29px;overflow:hidden"><div style="top:9.74px;font-size:12px;line-height:12px;color:#111;white-space:pre;font-family:'Liberation Sans',sans-serif;letter-spacing:0.9px;left:-479.5px;width:1000px;text-align:center;">18</div></div>
<div style="left:34px;top:405px;width:40px;height:61px;background:#faf7f0"></div>
<div style="left:34px;top:405px;width:1px;height:61px;background:#ffffff"></div>
<div style="left:34px;top:466px;width:40px;height:1px;background:#000"></div>
<div style="left:34px;top:404px;width:40px;height:62px;overflow:hidden"><div style="top:26.24px;font-size:12px;line-height:12px;color:#111;white-space:pre;font-family:'Liberation Sans',sans-serif;letter-spacing:0.9px;left:-479.5px;width:1000px;text-align:center;">19</div></div>
<div style="left:34px;top:467px;width:40px;height:15px;background:#faf7f0"></div>
<div style="left:34px;top:467px;width:1px;height:15px;background:#ffffff"></div>
<div style="left:34px;top:482px;width:40px;height:1px;background:#000"></div>
<div style="left:34px;top:466px;width:40px;height:16px;overflow:hidden"><div style="top:3.24px;font-size:12px;line-height:12px;color:#111;white-space:pre;font-family:'Liberation Sans',sans-serif;letter-spacing:0.9px;left:-479.5px;width:1000px;text-align:center;">20</div></div>
<div style="left:34px;top:483px;width:40px;height:15px;background:#faf7f0"></div>
<div style="left:34px;top:483px;width:1px;height:15px;background:#ffffff"></div>
<div style="left:34px;top:498px;width:40px;height:1px;background:#000"></div>
<div style="left:34px;top:482px;width:40px;height:16px;overflow:hidden"><div style="top:3.24px;font-size:12px;line-height:12px;color:#111;white-space:pre;font-family:'Liberation Sans',sans-serif;letter-spacing:0.9px;left:-479.5px;width:1000px;text-align:center;">21</div></div>
<div style="left:34px;top:499px;width:40px;height:10px;background:#faf7f0"></div>
<div style="left:34px;top:499px;width:1px;height:10px;background:#ffffff"></div>
<div style="left:34px;top:509px;width:40px;height:1px;background:#000"></div>
<div style="left:34px;top:498px;width:40px;height:11px;overflow:hidden"><div style="top:0.74px;font-size:12px;line-height:12px;color:#111;white-space:pre;font-family:'Liberation Sans',sans-serif;letter-spacing:0.9px;left:-479.5px;width:1000px;text-align:center;">22</div></div>
<div style="left:34px;top:510px;width:40px;height:7px;background:#faf7f0"></div>
<div style="left:34px;top:510px;width:1px;height:7px;background:#ffffff"></div>
<div style="left:34px;top:509px;width:40px;height:8px;overflow:hidden"><div style="top:-0.76px;font-size:12px;line-height:12px;color:#111;white-space:pre;font-family:'Liberation Sans',sans-serif;letter-spacing:0.9px;left:-479.5px;width:1000px;text-align:center;">23</div></div>
<div style="left:74px;top:168px;width:1px;height:349px;background:#000"></div>
<div style="left:75px;top:168px;width:626px;height:349px;background:#ffffff"></div>
<div style="left:75px;top:178px;width:626px;height:1px;background:#c0c0c0"></div>
<div style="left:75px;top:189px;width:626px;height:1px;background:#c0c0c0"></div>
<div style="left:75px;top:208px;width:626px;height:1px;background:#c0c0c0"></div>
<div style="left:75px;top:225px;width:626px;height:1px;background:#c0c0c0"></div>
<div style="left:75px;top:241px;width:626px;height:1px;background:#c0c0c0"></div>
<div style="left:75px;top:252px;width:626px;height:1px;background:#c0c0c0"></div>
<div style="left:75px;top:268px;width:626px;height:1px;background:#c0c0c0"></div>
<div style="left:75px;top:279px;width:626px;height:1px;background:#c0c0c0"></div>
<div style="left:75px;top:290px;width:626px;height:1px;background:#c0c0c0"></div>
<div style="left:75px;top:337px;width:626px;height:1px;background:#c0c0c0"></div>
<div style="left:75px;top:375px;width:626px;height:1px;background:#c0c0c0"></div>
<div style="left:75px;top:404px;width:626px;height:1px;background:#c0c0c0"></div>
<div style="left:75px;top:466px;width:626px;height:1px;background:#c0c0c0"></div>
<div style="left:75px;top:482px;width:626px;height:1px;background:#c0c0c0"></div>
<div style="left:75px;top:498px;width:626px;height:1px;background:#c0c0c0"></div>
<div style="left:75px;top:509px;width:626px;height:1px;background:#c0c0c0"></div>
<div style="left:246px;top:168px;width:1px;height:349px;background:#c0c0c0"></div>
<div style="left:453px;top:168px;width:1px;height:349px;background:#c0c0c0"></div>
<div style="left:586px;top:168px;width:1px;height:349px;background:#c0c0c0"></div>
<div style="left:689px;top:168px;width:1px;height:349px;background:#c0c0c0"></div>
<div style="left:247px;top:168px;width:442px;height:19px;background:#ffffff"></div>
<div style="left:75px;top:190px;width:169px;height:52px;background:#c0c0c0"></div>
<div style="left:244px;top:187px;width:449px;height:57px;background:#000"></div>
<div style="left:249px;top:209px;width:204px;height:16px;background:#ffcc99"></div>
<div style="left:249px;top:226px;width:204px;height:13px;background:#ffcc99"></div>
<div style="left:454px;top:209px;width:234px;height:16px;background:#ffcc99"></div>
<div style="left:454px;top:226px;width:234px;height:13px;background:#ffcc99"></div>
<div style="left:75px;top:253px;width:171px;height:84px;background:#c0c0c0"></div>
<div style="left:247px;top:253px;width:442px;height:15px;background:#000"></div>
<div style="left:453px;top:253px;width:1px;height:15px;background:#9a9a9a"></div>
<div style="left:586px;top:253px;width:1px;height:15px;background:#9a9a9a"></div>
<div style="left:247px;top:269px;width:442px;height:68px;background:#ffcc99"></div>
<div style="left:75px;top:252px;width:615px;height:1px;background:#000"></div>
<div style="left:75px;top:268px;width:615px;height:1px;background:#000"></div>
<div style="left:75px;top:279px;width:615px;height:1px;background:#000"></div>
<div style="left:75px;top:290px;width:615px;height:1px;background:#000"></div>
<div style="left:75px;top:337px;width:615px;height:1px;background:#000"></div>
<div style="left:75px;top:375px;width:615px;height:1px;background:#000"></div>
<div style="left:75px;top:404px;width:615px;height:1px;background:#000"></div>
<div style="left:75px;top:466px;width:615px;height:1px;background:#000"></div>
<div style="left:689px;top:268px;width:12px;height:1px;background:#000"></div>
<div style="left:246px;top:269px;width:1px;height:198px;background:#000"></div>
<div style="left:453px;top:269px;width:1px;height:198px;background:#000"></div>
<div style="left:586px;top:269px;width:1px;height:198px;background:#000"></div>
<div style="left:689px;top:269px;width:1px;height:198px;background:#000"></div>
<div style="left:246px;top:253px;width:1px;height:16px;background:#000"></div>
<div style="left:75px;top:253px;width:1px;height:214px;background:#000"></div>
<div style="left:77px;top:338px;width:169px;height:37px;background:#ccffcc"></div>
<div style="left:247px;top:338px;width:205px;height:37px;background:#ccffff"></div>
<div style="left:455px;top:338px;width:131px;height:37px;background:#ccffff"></div>
<div style="left:587px;top:338px;width:102px;height:37px;background:#ffff99"></div>
<div style="left:74px;top:338px;width:3px;height:129px;background:#000"></div>
<div style="left:452px;top:338px;width:3px;height:37px;background:#000"></div>
<div style="left:245px;top:481px;width:344px;height:19px;background:#000"></div>
<div style="left:248px;top:484px;width:338px;height:13px;background:#ffcc99"></div>
<div style="left:450px;top:190px;width:3px;height:3px;background:#ff0000"></div>
<div style="left:686px;top:190px;width:3px;height:3px;background:#ff0000"></div>
<div style="left:450px;top:209px;width:3px;height:3px;background:#ff0000"></div>
<div style="left:686px;top:209px;width:3px;height:3px;background:#ff0000"></div>
<div style="left:450px;top:226px;width:3px;height:3px;background:#ff0000"></div>
<div style="left:686px;top:226px;width:3px;height:3px;background:#ff0000"></div>
<div style="left:450px;top:253px;width:3px;height:3px;background:#ff0000"></div>
<div style="left:686px;top:269px;width:3px;height:3px;background:#ff0000"></div>
<div style="left:686px;top:291px;width:3px;height:3px;background:#ff0000"></div>
<div style="left:243px;top:338px;width:3px;height:3px;background:#ff0000"></div>
<div style="left:450px;top:338px;width:3px;height:3px;background:#ff0000"></div>
<div style="left:686px;top:338px;width:3px;height:3px;background:#ff0000"></div>
<div style="left:583px;top:484px;width:3px;height:3px;background:#ff0000"></div>
<div style="top:198.34px;font-size:10px;line-height:10px;color:#fff;white-space:pre;font-family:'Liberation Sans',sans-serif;font-weight:bold;letter-spacing:-0.1px;left:248px;">RuleSet</div>
<div style="top:198.34px;font-size:10px;line-height:10px;color:#fff;white-space:pre;font-family:'Liberation Sans',sans-serif;font-weight:bold;letter-spacing:-0.1px;left:455px;">Some business rules</div>
<div style="left:249px;top:209px;width:204px;height:16px;overflow:hidden"><div style="top:5.84px;font-size:10px;line-height:10px;color:#000;white-space:pre;font-family:'Liberation Sans',sans-serif;font-weight:bold;left:-1px;">Import</div></div>
<div style="left:454px;top:209px;width:234px;height:16px;overflow:hidden"><div style="top:5.84px;font-size:10px;line-height:10px;color:#000;white-space:pre;font-family:'Liberation Sans',sans-serif;font-weight:bold;letter-spacing:-0.05px;left:1px;">org.drools.decisiontable.Cheese, org.drools.decisiontable.Person</div></div>
<div style="left:249px;top:226px;width:204px;height:13px;overflow:hidden"><div style="top:5.34px;font-size:10px;line-height:10px;color:#000;white-space:pre;font-family:'Liberation Sans',sans-serif;font-weight:bold;left:-1px;">Sequential</div></div>
<div style="left:454px;top:226px;width:234px;height:13px;overflow:hidden"><div style="top:5.34px;font-size:10px;line-height:10px;color:#000;white-space:pre;font-family:'Liberation Sans',sans-serif;font-weight:bold;left:1px;">true</div></div>
<div style="top:257.34px;font-size:10px;line-height:10px;color:#fff;white-space:pre;font-family:'Liberation Sans',sans-serif;font-weight:bold;letter-spacing:0.15px;left:248px;">RuleTable Cheese fans</div>
<div style="left:247px;top:269px;width:206px;height:10px;overflow:hidden"><div style="top:1.18px;font-size:9px;line-height:9px;color:#000;white-space:pre;font-family:'Liberation Sans',sans-serif;left:1px;">CONDITION</div></div>
<div style="left:454px;top:269px;width:132px;height:10px;overflow:hidden"><div style="top:1.18px;font-size:9px;line-height:9px;color:#000;white-space:pre;font-family:'Liberation Sans',sans-serif;left:1px;">CONDITION</div></div>
<div style="left:587px;top:269px;width:102px;height:10px;overflow:hidden"><div style="top:1.18px;font-size:9px;line-height:9px;color:#000;white-space:pre;font-family:'Liberation Sans',sans-serif;left:1px;">ACTION</div></div>
<div style="top:281.18px;font-size:9px;line-height:9px;color:#000;white-space:pre;font-family:'Liberation Sans',sans-serif;letter-spacing:0.3px;left:248px;">Person</div>
<div style="top:281.18px;font-size:9px;line-height:9px;color:#000;white-space:pre;font-family:'Liberation Sans',sans-serif;letter-spacing:0.3px;left:455px;">Cheese</div>
<div style="top:281.18px;font-size:9px;line-height:9px;color:#000;white-space:pre;font-family:'Liberation Sans',sans-serif;letter-spacing:0.3px;left:588px;">list</div>
<div style="top:326.84px;font-size:10px;line-height:10px;color:#000;white-space:pre;font-family:'Liberation Sans',sans-serif;font-weight:bold;left:77px;">(descriptions)</div>
<div style="top:327.68px;font-size:9px;line-height:9px;color:#000;white-space:pre;font-family:'Liberation Sans',sans-serif;letter-spacing:0.2px;left:248px;">age</div>
<div style="top:327.68px;font-size:9px;line-height:9px;color:#000;white-space:pre;font-family:'Liberation Sans',sans-serif;letter-spacing:0.2px;left:455px;">type</div>
<div style="top:327.68px;font-size:9px;line-height:9px;color:#000;white-space:pre;font-family:'Liberation Sans',sans-serif;left:588px;">add("$param")</div>
<div style="top:352.34px;font-size:10px;line-height:10px;color:#000;white-space:pre;font-family:'Liberation Sans',sans-serif;font-weight:bold;letter-spacing:0.3px;left:-339px;width:1000px;text-align:center;">Case</div>
<div style="top:352.34px;font-size:10px;line-height:10px;color:#000;white-space:pre;font-family:'Liberation Sans',sans-serif;font-weight:bold;letter-spacing:0.1px;left:-150.5px;width:1000px;text-align:center;">Persons age</div>
<div style="top:352.34px;font-size:10px;line-height:10px;color:#000;white-space:pre;font-family:'Liberation Sans',sans-serif;font-weight:bold;letter-spacing:0.1px;left:20px;width:1000px;text-align:center;">Cheese type</div>
<div style="top:352.34px;font-size:10px;line-height:10px;color:#000;white-space:pre;font-family:'Liberation Sans',sans-serif;font-weight:bold;letter-spacing:0.2px;left:137.5px;width:1000px;text-align:center;">Log</div>
<div style="top:385.84px;font-size:10px;line-height:10px;color:#000;white-space:pre;font-family:'Liberation Sans',sans-serif;font-weight:bold;letter-spacing:0.2px;left:-339px;width:1000px;text-align:center;">Old guy</div>
<div style="top:394.34px;font-size:10px;line-height:10px;color:#000;white-space:pre;font-family:'Liberation Sans',sans-serif;font-weight:bold;letter-spacing:0.5px;left:-150.5px;width:1000px;text-align:center;">42</div>
<div style="top:394.34px;font-size:10px;line-height:10px;color:#000;white-space:pre;font-family:'Liberation Sans',sans-serif;font-weight:bold;letter-spacing:0.2px;left:20px;width:1000px;text-align:center;">stilton</div>
<div style="top:394.34px;font-size:10px;line-height:10px;color:#000;white-space:pre;font-family:'Liberation Sans',sans-serif;font-weight:bold;letter-spacing:0.2px;left:137.5px;width:1000px;text-align:center;">Old man stilton</div>
<div style="top:431.34px;font-size:10px;line-height:10px;color:#000;white-space:pre;font-family:'Liberation Sans',sans-serif;font-weight:bold;letter-spacing:0.2px;left:-339px;width:1000px;text-align:center;">Young guy</div>
<div style="top:456.34px;font-size:10px;line-height:10px;color:#000;white-space:pre;font-family:'Liberation Sans',sans-serif;font-weight:bold;letter-spacing:0.5px;left:-150.5px;width:1000px;text-align:center;">21</div>
<div style="top:456.34px;font-size:10px;line-height:10px;color:#000;white-space:pre;font-family:'Liberation Sans',sans-serif;font-weight:bold;letter-spacing:0.2px;left:20px;width:1000px;text-align:center;">cheddar</div>
<div style="top:456.34px;font-size:10px;line-height:10px;color:#000;white-space:pre;font-family:'Liberation Sans',sans-serif;font-weight:bold;left:137.5px;width:1000px;text-align:center;">Young man cheddar</div>
<div style="top:487.84px;font-size:10px;line-height:10px;color:#000;white-space:pre;font-family:'Liberation Sans',sans-serif;font-weight:bold;letter-spacing:0.3px;left:248px;">Variables</div>
<div style="top:487.34px;font-size:10px;line-height:10px;color:#000;white-space:pre;font-family:'Liberation Sans',sans-serif;font-weight:bold;left:20px;width:1000px;text-align:center;">java.util.List list</div>
<div style="left:7px;top:191px;width:12px;height:12px;background:#f7f5ef;border-top:1px solid #fff;border-left:1px solid #fff;border-right:1px solid #9a9a9a;border-bottom:1px solid #9a9a9a"></div>
<div style="left:10px;top:196px;width:6px;height:2px;background:#000"></div>
<div style="left:7px;top:203px;width:2px;height:38px;background:#000"></div>
<div style="left:7px;top:239px;width:6px;height:2px;background:#000"></div>
<div style="left:7px;top:254px;width:12px;height:12px;background:#f7f5ef;border-top:1px solid #fff;border-left:1px solid #fff;border-right:1px solid #9a9a9a;border-bottom:1px solid #9a9a9a"></div>
<div style="left:10px;top:259px;width:6px;height:2px;background:#000"></div>
<div style="left:7px;top:266px;width:2px;height:72px;background:#000"></div>
<div style="left:7px;top:336px;width:6px;height:2px;background:#000"></div>
<div style="left:7px;top:484px;width:12px;height:12px;background:#f7f5ef;border-top:1px solid #fff;border-left:1px solid #fff;border-right:1px solid #9a9a9a;border-bottom:1px solid #9a9a9a"></div>
<div style="left:10px;top:489px;width:6px;height:2px;background:#000"></div>
<div style="left:7px;top:496px;width:6px;height:2px;background:#000"></div>
<div style="left:701px;top:149px;width:15px;height:4px;background:#000"></div>
<div style="left:701px;top:153px;width:15px;height:15px;background:linear-gradient(90deg,#fdfcf9,#efeadc);border:1px solid #a38f62"></div>
<svg style="position:absolute;left:703px;top:157px" width="11" height="6" viewBox="0 0 11 6"><path d="M0.5 5.5h10L5.5 0.5z" fill="#111"/></svg>
<div style="left:701px;top:167px;width:15px;height:336px;background:#ebe2c9;border-left:1px solid #a38f62;border-right:1px solid #a38f62"></div>
<div style="left:701px;top:217px;width:15px;height:136px;background:linear-gradient(90deg,#ffffff,#f3efe4);border:1px solid #a38f62"></div>
<div style="left:701px;top:502px;width:15px;height:15px;background:linear-gradient(90deg,#fdfcf9,#efeadc);border:1px solid #a38f62"></div>
<svg style="position:absolute;left:703px;top:506px" width="11" height="6" viewBox="0 0 11 6"><path d="M0.5 0.5h10L5.5 5.5z" fill="#111"/></svg>
<div style="left:716px;top:149px;width:2px;height:405px;background:#f7f5ef"></div>
<div style="left:5px;top:517px;width:696px;height:15px;background:#f7f5ef"></div>
<div style="left:124px;top:517px;width:428px;height:1px;background:#000"></div>
<div style="left:6px;top:518px;width:13px;height:13px;background:linear-gradient(#fbf8ef,#e9e1cb);border:1px solid #c9b88e;border-radius:3px"></div>
<div style="left:21px;top:518px;width:13px;height:13px;background:linear-gradient(#fbf8ef,#e9e1cb);border:1px solid #c9b88e;border-radius:3px"></div>
<div style="left:36px;top:518px;width:13px;height:13px;background:linear-gradient(#fbf8ef,#e9e1cb);border:1px solid #c9b88e;border-radius:3px"></div>
<div style="left:51px;top:518px;width:13px;height:13px;background:linear-gradient(#fbf8ef,#e9e1cb);border:1px solid #c9b88e;border-radius:3px"></div>
<svg style="position:absolute;left:6px;top:518px" width="60" height="13" viewBox="0 0 60 13"><g fill="#c8bfa8"><rect x="3.5" y="3.5" width="1" height="6"/><path d="M9 3.5v6L5.5 6.5z"/><path d="M21 3.5v6L17.5 6.5z"/><path d="M32 3.5v6l3.5-3z"/><path d="M47 3.5v6l3.5-3z"/><rect x="51" y="3.5" width="1" height="6"/></g></svg>
<svg style="position:absolute;left:64px;top:516px" width="101" height="16" viewBox="0 0 101 16"><path d="M60 1.5L56.5 14.5H93.5L100 1.5z" fill="#faf7f0"/><path d="M60 1.5L56.5 14.5H93.5L100 1.5" fill="none" stroke="#111" stroke-width="1.2"/><path d="M1 0L8.5 14.5H54.5L60 1.5" fill="#fff" stroke="#111" stroke-width="1.2"/><path d="M1 0.6H60" stroke="#fff" stroke-width="1.4"/></svg>
<div style="top:517.02px;font-size:12.5px;line-height:12.5px;color:#111;white-space:pre;font-family:'Liberation Sans',sans-serif;font-weight:bold;letter-spacing:0.25px;left:75.5px;">Tables</div>
<div style="top:517.02px;font-size:12.5px;line-height:12.5px;color:#111;white-space:pre;font-family:'Liberation Sans',sans-serif;letter-spacing:0.1px;left:128.5px;">Lists</div>
<svg style="position:absolute;left:548px;top:516px" width="12" height="16" viewBox="0 0 12 16"><path d="M0 1.5h3.5v14h5" fill="none" stroke="#111" stroke-width="1.2"/><rect x="8.3" y="1" width="1.8" height="15" fill="#111"/></svg>
<div style="left:558px;top:517px;width:140px;height:15px;background:#ebe2c9;border-top:1px solid #a38f62;border-bottom:1px solid #a38f62"></div>
<div style="left:558px;top:517px;width:15px;height:15px;background:linear-gradient(#fdfcf9,#efeadc);border:1px solid #a38f62"></div>
<svg style="position:absolute;left:561px;top:520px" width="8" height="9" viewBox="0 0 8 9"><path d="M6 0.5v8L1 4.5z" fill="#111"/></svg>
<div style="left:572px;top:517px;width:38px;height:15px;background:linear-gradient(#ffffff,#f3efe4);border:1px solid #a38f62"></div>
<div style="left:683px;top:517px;width:15px;height:15px;background:linear-gradient(#fdfcf9,#efeadc);border:1px solid #a38f62"></div>
<svg style="position:absolute;left:687px;top:520px" width="8" height="9" viewBox="0 0 8 9"><path d="M1 0.5v8L6 4.5z" fill="#111"/></svg>
<div style="left:698px;top:517px;width:3px;height:15px;background:#000"></div>
<div style="left:3px;top:532px;width:715px;height:22px;background:#f7f5ef"></div>
<div style="left:8px;top:536px;width:95px;height:17px;background:#f9f7f2;border-top:1px solid #c9c3b3;border-left:1px solid #c9c3b3;border-right:1px solid #fff;border-bottom:1px solid #fff"></div>
<div style="left:108px;top:536px;width:137px;height:17px;background:#f9f7f2;border-top:1px solid #c9c3b3;border-left:1px solid #c9c3b3;border-right:1px solid #fff;border-bottom:1px solid #fff"></div>
<div style="left:250px;top:536px;width:48px;height:17px;background:#f9f7f2;border-top:1px solid #c9c3b3;border-left:1px solid #c9c3b3;border-right:1px solid #fff;border-bottom:1px solid #fff"></div>
<div style="left:302px;top:536px;width:50px;height:17px;background:#f9f7f2;border-top:1px solid #c9c3b3;border-left:1px solid #c9c3b3;border-right:1px solid #fff;border-bottom:1px solid #fff"></div>
<div style="left:356px;top:536px;width:43px;height:17px;background:#f9f7f2;border-top:1px solid #c9c3b3;border-left:1px solid #c9c3b3;border-right:1px solid #fff;border-bottom:1px solid #fff"></div>
<div style="left:403px;top:536px;width:27px;height:17px;background:#f9f7f2;border-top:1px solid #c9c3b3;border-left:1px solid #c9c3b3;border-right:1px solid #fff;border-bottom:1px solid #fff"></div>
<div style="left:434px;top:536px;width:25px;height:17px;background:#f9f7f2;border-top:1px solid #c9c3b3;border-left:1px solid #c9c3b3;border-right:1px solid #fff;border-bottom:1px solid #fff"></div>
<div style="left:463px;top:536px;width:250px;height:17px;background:#f9f7f2;border-top:1px solid #c9c3b3;border-left:1px solid #c9c3b3;border-right:1px solid #fff;border-bottom:1px solid #fff"></div>
<div style="top:538.00px;font-size:13px;line-height:13px;color:#111;white-space:pre;font-family:'Liberation Sans',sans-serif;letter-spacing:0.3px;left:13px;">Sheet 1 / 2</div>
<div style="top:538.00px;font-size:13px;line-height:13px;color:#111;white-space:pre;font-family:'Liberation Sans',sans-serif;letter-spacing:-0.3px;left:113px;">PageStyle_Tables</div>
<div style="top:538.00px;font-size:13px;line-height:13px;color:#111;white-space:pre;font-family:'Liberation Sans',sans-serif;left:-226px;width:1000px;text-align:center;">100%</div>
<div style="top:538.00px;font-size:13px;line-height:13px;color:#111;white-space:pre;font-family:'Liberation Sans',sans-serif;left:-123px;width:1000px;text-align:center;">STD</div>
<div style="top:538.00px;font-size:13px;line-height:13px;color:#111;white-space:pre;font-family:'Liberation Sans',sans-serif;letter-spacing:0.2px;left:88px;width:1000px;text-align:center;">Sum=0 Average=</div>
<!--GRID-->
</body></html>
